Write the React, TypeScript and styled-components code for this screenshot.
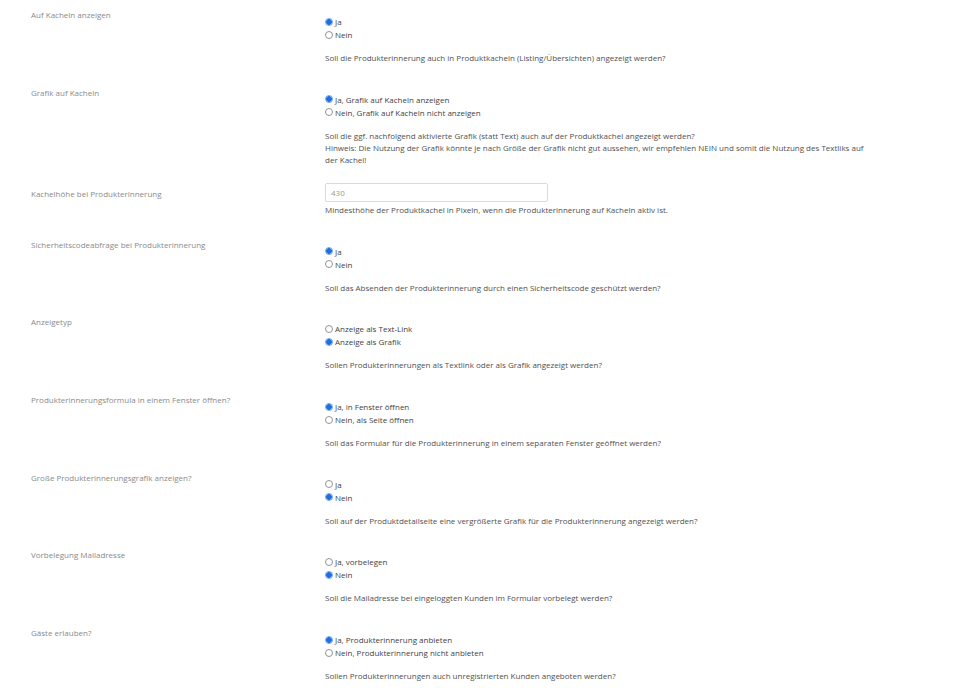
import styled, { createGlobalStyle, css } from 'styled-components'

const GlobalStyle = createGlobalStyle`
    body {
        margin: 0;
        background: #ffffff;
        font-family: "Open Sans", "Noto Sans", sans-serif;
    }
`

const Page = styled.div`
    display: flex;
    flex-direction: column;
    width: 968px;
    padding-top: 9px;
`

const Row = styled.div<{ $input?: boolean }>`
    display: grid;
    grid-template-columns: 294px 545px;
    padding-left: 31px;
    padding-top: ${p => (p.$input ? 17.3 : 22.7)}px;
    &:first-child {
        padding-top: 0;
    }
`

const Label = styled.div<{ $input?: boolean }>`
    padding-top: ${p => (p.$input ? 5 : 0)}px;
    font-size: 8px;
    line-height: 12px;
    color: #8a8a8a;
`

const Content = styled.div<{ $input?: boolean }>`
    padding-top: ${p => (p.$input ? 0 : 6)}px;
    display: flex;
    flex-direction: column;
`

const RadioGroup = styled.div`
    display: flex;
    flex-direction: column;
    margin-bottom: 11px;
`

const RadioRow = styled.label`
    display: flex;
    align-items: center;
    height: 13px;
    font-size: 8px;
    color: #3f3f3f;
`

const Dot = styled.span<{ $on: boolean }>`
    width: 8px;
    height: 8px;
    box-sizing: border-box;
    border-radius: 50%;
    margin-right: 2px;
    ${p =>
        p.$on
            ? css`
                  border: 1px solid #6fa3ee;
                  background: radial-gradient(circle, #1d6fe0 0 2.6px, #9cc0f4 3px);
              `
            : css`
                  border: 1px solid #959595;
                  background: #ffffff;
              `}
`

const Hint = styled.div`
    font-size: 8px;
    line-height: 12px;
    color: #505050;
`

const TextInput = styled.input`
    box-sizing: border-box;
    width: 223px;
    height: 19px;
    margin: 0 0 2px 0;
    padding: 0 5px;
    border: 1px solid #dadada;
    border-radius: 2px;
    font-family: inherit;
    font-size: 8px;
    color: #9a9a9a;
    outline: none;
`

type Setting = {
    label: string
    options?: { text: string; on: boolean }[]
    input?: string
    hint: string[]
}

const settings: Setting[] = [
    {
        label: 'Auf Kacheln anzeigen',
        options: [{ text: 'Ja', on: true }, { text: 'Nein', on: false }],
        hint: ['Soll die Produkterinnerung auch in Produktkacheln (Listing/Übersichten) angezeigt werden?'],
    },
    {
        label: 'Grafik auf Kacheln',
        options: [
            { text: 'Ja, Grafik auf Kacheln anzeigen', on: true },
            { text: 'Nein, Grafik auf Kacheln nicht anzeigen', on: false },
        ],
        hint: [
            'Soll die ggf. nachfolgend aktivierte Grafik (statt Text) auch auf der Produktkachel angezeigt werden?',
            'Hinweis: Die Nutzung der Grafik könnte je nach Größe der Grafik nicht gut aussehen, wir empfehlen NEIN und somit die Nutzung des Textliks auf der Kachel!',
        ],
    },
    {
        label: 'Kachelhöhe bei Produkterinnerung',
        input: '430',
        hint: ['Mindesthöhe der Produktkachel in Pixeln, wenn die Produkterinnerung auf Kacheln aktiv ist.'],
    },
    {
        label: 'Sicherheitscodeabfrage bei Produkterinnerung',
        options: [{ text: 'Ja', on: true }, { text: 'Nein', on: false }],
        hint: ['Soll das Absenden der Produkterinnerung durch einen Sicherheitscode geschützt werden?'],
    },
    {
        label: 'Anzeigetyp',
        options: [
            { text: 'Anzeige als Text-Link', on: false },
            { text: 'Anzeige als Grafik', on: true },
        ],
        hint: ['Sollen Produkterinnerungen als Textlink oder als Grafik angezeigt werden?'],
    },
    {
        label: 'Produkterinnerungsformula in einem Fenster öffnen?',
        options: [
            { text: 'Ja, in Fenster öffnen', on: true },
            { text: 'Nein, als Seite öffnen', on: false },
        ],
        hint: ['Soll das Formular für die Produkterinnerung in einem separaten Fenster geöffnet werden?'],
    },
    {
        label: 'Große Produkterinnerungsgrafik anzeigen?',
        options: [{ text: 'Ja', on: false }, { text: 'Nein', on: true }],
        hint: ['Soll auf der Produktdetailseite eine vergrößerte Grafik für die Produkterinnerung angezeigt werden?'],
    },
    {
        label: 'Vorbelegung Mailadresse',
        options: [
            { text: 'Ja, vorbelegen', on: false },
            { text: 'Nein', on: true },
        ],
        hint: ['Soll die Mailadresse bei eingeloggten Kunden im Formular vorbelegt werden?'],
    },
    {
        label: 'Gäste erlauben?',
        options: [
            { text: 'Ja, Produkterinnerung anbieten', on: true },
            { text: 'Nein, Produkterinnerung nicht anbieten', on: false },
        ],
        hint: ['Sollen Produkterinnerungen auch unregistrierten Kunden angeboten werden?'],
    },
]

export default function App() {
    return (
        <Page>
            <GlobalStyle />
            {settings.map(s => (
                <Row key={s.label} $input={!!s.input}>
                    <Label $input={!!s.input}>{s.label}</Label>
                    <Content $input={!!s.input}>
                        {s.options && (
                            <RadioGroup>
                                {s.options.map(o => (
                                    <RadioRow key={o.text}>
                                        <Dot $on={o.on} />
                                        {o.text}
                                    </RadioRow>
                                ))}
                            </RadioGroup>
                        )}
                        {s.input && <TextInput defaultValue={s.input} />}
                        {s.hint.map(h => (
                            <Hint key={h}>{h}</Hint>
                        ))}
                    </Content>
                </Row>
            ))}
        </Page>
    )
}
